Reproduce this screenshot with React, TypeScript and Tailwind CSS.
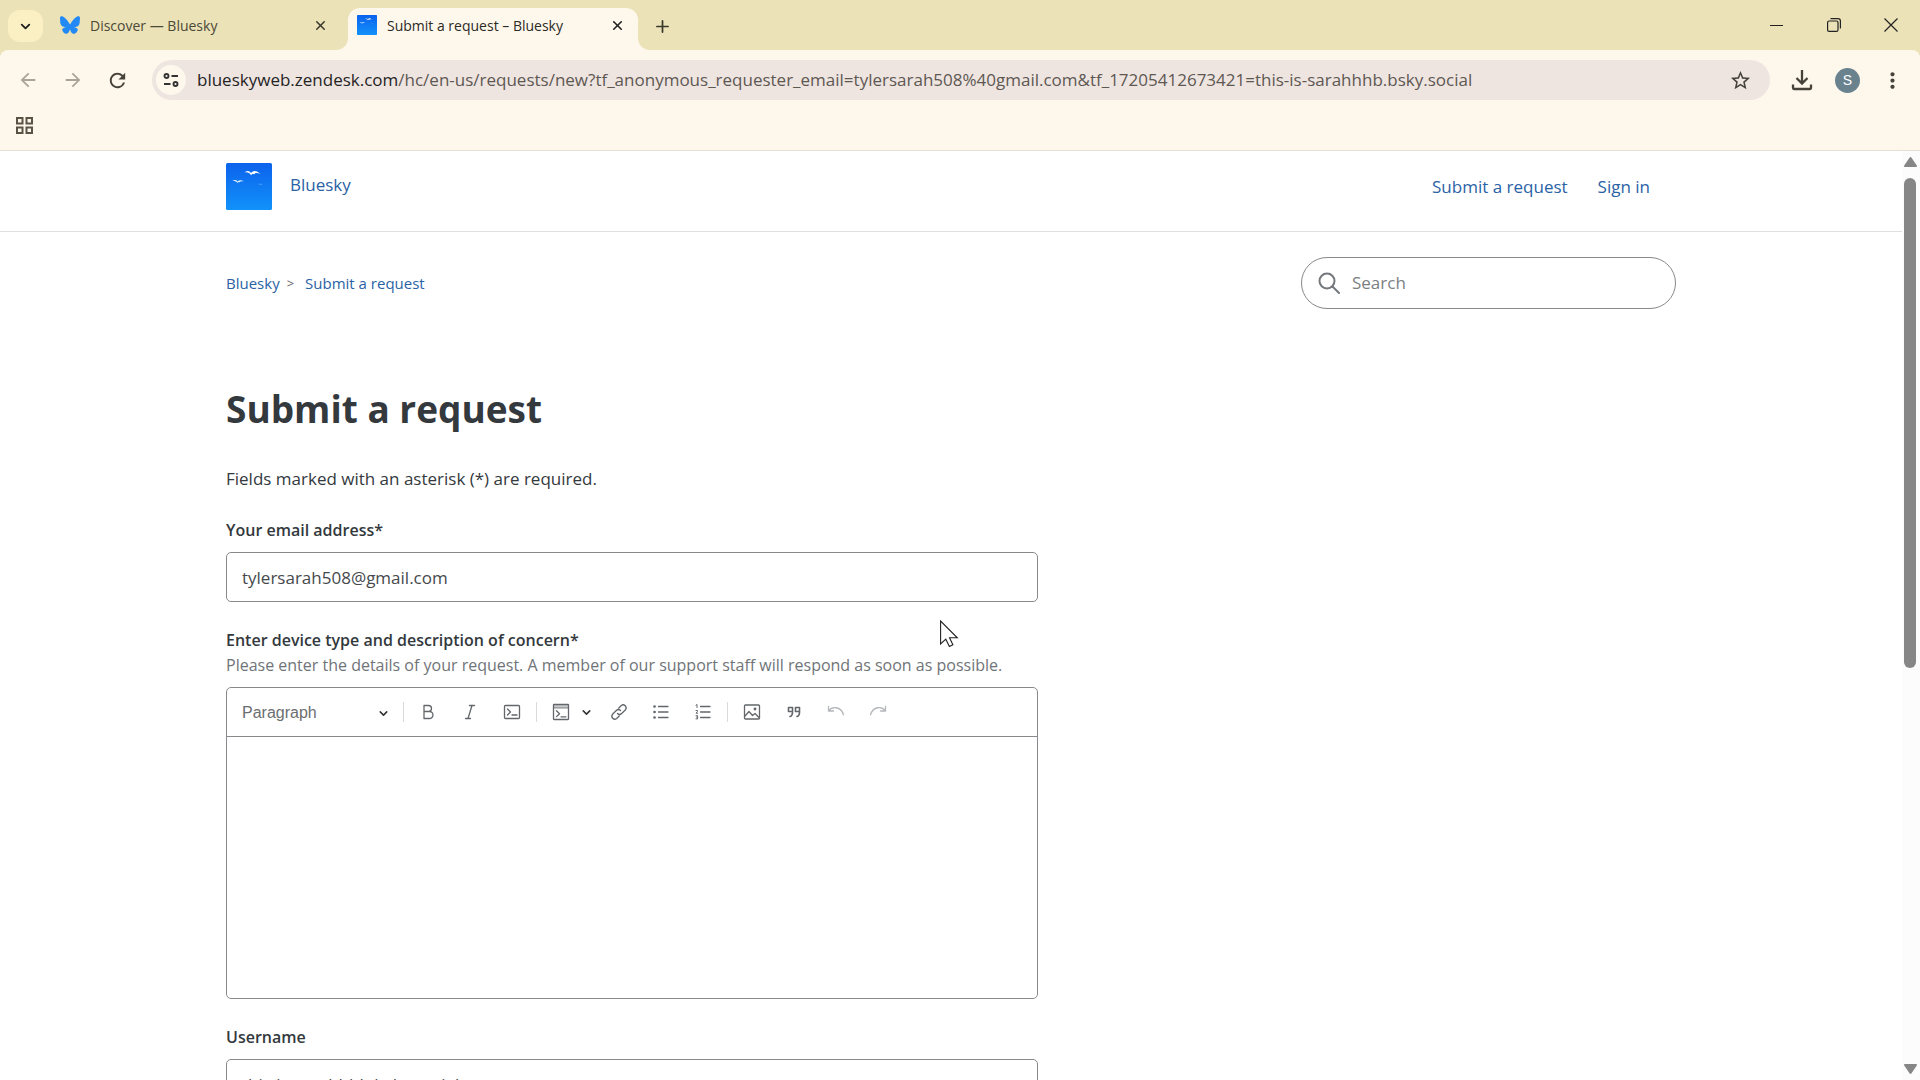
import type { ReactNode } from "react";
import { ChevronDown, Plus, X } from "lucide-react";
import { MdArrowBack, MdArrowForward, MdMoreVert, MdRefresh, MdStarBorder } from "react-icons/md";

const linkColor = "text-[#2a62a6]";

function BirdsLogo({ className }: { className: string }) {
  return (
    <svg viewBox="0 0 46 47" className={className} preserveAspectRatio="none" aria-hidden="true">
      <defs>
        <linearGradient id="sky" x1="0" y1="0" x2="0" y2="1">
          <stop offset="0" stopColor="#0c62ec" />
          <stop offset="1" stopColor="#1192fa" />
        </linearGradient>
      </defs>
      <rect width="46" height="47" rx="1.5" fill="url(#sky)" />
      <path
        d="M18.500 9.500c2.500-2.300 5-2 6.500.6 2-3 5.500-3.200 9.500 1-3-1.500-5.500-1.200-6.500.2l-1.500-.6-1.500 1.600c-1.500-2.700-3.500-3.300-6.500-2.800z"
        fill="#fff"
      />
      <path
        d="M6.500 18c2-1.600 4-1.200 5 .4 1.500-1.500 4-1.500 6.500-.2-2.500-.2-4 .3-4.800 1.400l-1-.5-.8.900c-1.200-1.800-2.700-2.200-4.900-2z"
        fill="#d8ecff"
      />
      <path d="M32 21.300c1.500-.8 3.500-.6 4.800.4-1.600-.2-3-.1-4.800-.4z" fill="#5fb0ff" />
    </svg>
  );
}

function Butterfly() {
  return (
    <svg viewBox="0 0 568 501" className="h-[18px] w-5 shrink-0" fill="#2389f5" aria-hidden="true">
      <path d="M123 34C188 83 259 182 284 235 309 182 380 83 445 34 492-2 568-29 568 58c0 17-10 146-16 167-20 72-94 90-160 79 115 20 144 85 81 149-120 123-172-31-185-70-3-8-4-11-4-8 0-3-1 0-4 8-13 39-65 193-185 70-63-64-34-129 81-149-66 11-140-7-160-79C10 204 0 75 0 58 0-29 76-2 123 34z" />
    </svg>
  );
}

function IconButton({ label, className = "", children }: { label: string; className?: string; children: ReactNode }) {
  return (
    <button type="button" aria-label={label} className={`flex shrink-0 items-center justify-center ${className}`}>
      {children}
    </button>
  );
}

function TabStrip() {
  return (
    <div className="flex h-[50px] items-end bg-[#ebe2b8] text-[14px] text-[#3b382c]">
      <IconButton label="Search tabs" className="mb-2 ml-2 h-8 w-[35px] rounded-xl bg-[#fbf0c4] text-[#222]">
        <ChevronDown size={15} strokeWidth={3} />
      </IconButton>
      <div className="flex h-[42px] w-[305px] items-center gap-[10px] pr-5 pb-2 pl-[17px]">
        <Butterfly />
        <span className="flex-1 truncate text-[#4c4937]">Discover — Bluesky</span>
        <IconButton label="Close tab">
          <X size={15} strokeWidth={2.400} />
        </IconButton>
      </div>
      <div className="relative flex h-[42px] w-[290px] items-center gap-[10px] rounded-t-xl bg-[#fef7ec] pr-[13px] pb-2 pl-[9px]">
        <span className="absolute bottom-0 -left-3 h-3 w-3 overflow-hidden bg-[#fef7ec]">
          <span className="block h-3 w-3 rounded-br-xl bg-[#ebe2b8]" />
        </span>
        <span className="absolute -right-3 bottom-0 h-3 w-3 overflow-hidden bg-[#fef7ec]">
          <span className="block h-3 w-3 rounded-bl-xl bg-[#ebe2b8]" />
        </span>
        <BirdsLogo className="h-5 w-5 shrink-0" />
        <span className="flex-1 truncate text-[#2b2a25]">Submit a request – Bluesky</span>
        <IconButton label="Close tab" className="text-[#222]">
          <X size={15} strokeWidth={2.600} />
        </IconButton>
      </div>
      <IconButton label="New tab" className="mb-2 ml-2 h-8 w-8">
        <Plus size={19} strokeWidth={2.200} />
      </IconButton>
      <div className="ml-auto flex h-full items-center pr-px text-[#222]">
        <IconButton label="Minimize" className="h-full w-[57px]">
          <svg width="13" height="13" viewBox="0 0 13 13" stroke="currentColor">
            <path d="M0 6.500h13" />
          </svg>
        </IconButton>
        <IconButton label="Restore" className="h-full w-[57px]">
          <svg width="14" height="14" viewBox="0 0 14 14" fill="none" stroke="currentColor" strokeWidth="1.200">
            <rect x=".6" y="3" width="10.400" height="10.400" rx="1.500" />
            <path d="M3.500.6H11A2.400 2.400 0 0 1 13.400 3v7.500" />
          </svg>
        </IconButton>
        <IconButton label="Close" className="h-full w-[57px]">
          <svg width="14" height="14" viewBox="0 0 14 14" stroke="currentColor" strokeWidth="1.200">
            <path d="M.5.5l13 13M13.500.5l-13 13" />
          </svg>
        </IconButton>
      </div>
    </div>
  );
}

function AddressBar() {
  return (
    <div className="bg-[#ebe2b8]">
      <div className="flex h-[60px] items-center rounded-t-lg bg-[#fef7ec] px-[15px] text-[#45423a]">
        <IconButton label="Back" className="mr-5 w-[25px] text-[#a9a498]">
          <MdArrowBack size={22} />
        </IconButton>
        <IconButton label="Forward" className="mr-5 w-[25px] text-[#a9a498]">
          <MdArrowForward size={22} />
        </IconButton>
        <IconButton label="Reload" className="mr-[22px] w-[25px]">
          <MdRefresh size={23} />
        </IconButton>
        <div className="flex h-10 flex-1 items-center rounded-full bg-[#eee5e1] pr-[18px] pl-1">
          <IconButton label="View site information" className="mr-[11px] h-[30px] w-[30px] rounded-full bg-[#fef7ec]">
            <svg width="16" height="16" viewBox="0 0 16 16" fill="none" stroke="#333" strokeWidth="1.900">
              <circle cx="3.500" cy="4" r="2" />
              <path d="M8.500 4H15M1 12h6.500" />
              <circle cx="12.500" cy="12" r="2" />
            </svg>
          </IconButton>
          <p className="flex-1 truncate text-[17px] text-[#5e5853]">
            <span className="text-[#25231f]">blueskyweb.zendesk.com</span>
            /hc/en-us/requests/new?tf_anonymous_requester_email=tylersarah508%40gmail.com&amp;tf_17205412673421=this-is-sarahhhb.bsky.social
          </p>
          <IconButton label="Bookmark this page">
            <MdStarBorder size={23} />
          </IconButton>
        </div>
        <IconButton label="Downloads" className="ml-[18px]">
          <svg width="28" height="28" viewBox="0 0 28 28" fill="none" stroke="currentColor" strokeWidth="2.300">
            <path d="M14 4v13M8.500 12l5.500 5.500 5.500-5.500M5 18.500V22a1 1 0 0 0 1 1h16a1 1 0 0 0 1-1v-3.500" />
          </svg>
        </IconButton>
        <button
          type="button"
          aria-label="Profile"
          className="ml-[19px] flex h-[25px] w-[25px] items-center justify-center rounded-full bg-[#6a828e] font-['Liberation_Sans',sans-serif] text-[14px] text-white"
        >
          S
        </button>
        <IconButton label="Menu" className="ml-5">
          <MdMoreVert size={25} />
        </IconButton>
      </div>
    </div>
  );
}

function BookmarksBar() {
  return (
    <div className="flex h-[41px] items-start border-b border-[#e6dfd3] bg-[#fef7ec] pt-[7px] pl-4 text-[#5a5344]">
      <IconButton label="Apps">
        <svg width="17" height="17" viewBox="0 0 17 17" fill="none" stroke="currentColor" strokeWidth="2">
          <rect x="1" y="1" width="5.500" height="5.500" />
          <rect x="10.500" y="1" width="5.500" height="5.500" />
          <rect x="1" y="10.500" width="5.500" height="5.500" />
          <rect x="10.500" y="10.500" width="5.500" height="5.500" />
        </svg>
      </IconButton>
    </div>
  );
}

function Glyph({ children }: { children: ReactNode }) {
  return (
    <svg
      width="18"
      height="18"
      viewBox="0 0 18 18"
      fill="none"
      stroke="currentColor"
      strokeWidth="1.300"
      strokeLinecap="round"
      strokeLinejoin="round"
      aria-hidden="true"
    >
      {children}
    </svg>
  );
}

function Separator() {
  return <span className="mx-[3px] h-5 w-px shrink-0 bg-[#d8dcde]" />;
}

const toolButton = "h-10 w-[42px]";

function EditorToolbar() {
  return (
    <div className="flex h-[49px] items-center border-b border-[#87898c] text-[#63676b]">
      <div className="relative">
        <select
          aria-label="Heading"
          className="h-10 w-[173px] appearance-none bg-transparent pl-[15px] font-['Liberation_Sans',sans-serif] text-[16px] text-[#6b6e71]"
        >
          <option>Paragraph</option>
        </select>
        <ChevronDown size={13} strokeWidth={2.800} className="pointer-events-none absolute top-[15px] right-[10px] text-[#333]" />
      </div>
      <Separator />
      <IconButton label="Bold" className={toolButton}>
        <Glyph>
          <path d="M5 2.500h4.500a3 3 0 0 1 0 6H5zM5 8.500h5.500a3.500 3.500 0 0 1 0 7H5z" />
        </Glyph>
      </IconButton>
      <IconButton label="Italic" className={toolButton}>
        <Glyph>
          <path d="M8.500 2.500h5M4.500 15.500h5M11 2.500l-4 13" />
        </Glyph>
      </IconButton>
      <IconButton label="Code" className={toolButton}>
        <Glyph>
          <rect x="1.500" y="2.500" width="15" height="13" rx="1" />
          <path d="M4.500 6l3 3-3 3M9 12h5" />
        </Glyph>
      </IconButton>
      <Separator />
      <IconButton label="Insert code block" className="h-10 w-[34px] pl-2">
        <Glyph>
          <rect x="1.500" y="1.500" width="15" height="3.500" fill="currentColor" fillOpacity=".35" stroke="none" />
          <rect x="1.500" y="1.500" width="15" height="15" rx=".5" />
          <path d="M1.500 5h15" strokeWidth=".8" />
          <path d="M4.500 7.800l3 2.900-3 2.900M9 13.800h5" />
        </Glyph>
      </IconButton>
      <IconButton label="Code block language" className="h-10 w-6 text-[#333]">
        <ChevronDown size={13} strokeWidth={2.800} />
      </IconButton>
      <IconButton label="Link" className={toolButton}>
        <Glyph>
          <path d="M7.500 10.500a3 3 0 0 0 4.200 0l3.800-3.800a3 3 0 0 0-4.200-4.200L8.800 5M10.500 7.500a3 3 0 0 0-4.200 0l-3.800 3.800a3 3 0 0 0 4.200 4.200L9.200 13" />
        </Glyph>
      </IconButton>
      <IconButton label="Bulleted list" className={toolButton}>
        <Glyph>
          <path d="M6.500 3.500h9.500M6.500 9h9.500M6.500 14.500h9.500" />
          <path d="M2.500 3.500h.1M2.500 9h.1M2.500 14.500h.1" strokeWidth="2.600" />
        </Glyph>
      </IconButton>
      <IconButton label="Numbered list" className={toolButton}>
        <Glyph>
          <path d="M6.500 3.500h9.500M6.500 9h9.500M6.500 14.500h9.500" />
          <path d="M2 2.200l1-.7v3M2 7.500h1.500v1L2 10.200h1.700M2 12.700h1.600v1.500H2.500h1.100v1.700H2" strokeWidth="1" />
        </Glyph>
      </IconButton>
      <Separator />
      <IconButton label="Add image" className={toolButton}>
        <Glyph>
          <rect x="1.500" y="2" width="15" height="14" rx="1" />
          <path d="M2 13l4-4.500 3.500 4 2.500-2 4 4" />
          <circle cx="12" cy="6" r=".8" fill="currentColor" />
        </Glyph>
      </IconButton>
      <IconButton label="Quote" className={toolButton}>
        <Glyph>
          <path d="M7.500 8.500H3.500v-4h4v5c0 2-.8 3.500-2.500 4M14.500 8.500h-4v-4h4v5c0 2-.8 3.500-2.500 4" strokeWidth="1.600" />
        </Glyph>
      </IconButton>
      <IconButton label="Undo" className={`${toolButton} text-[#b4b7ba]`}>
        <Glyph>
          <path d="M1.500 3.500v4.500h5M1.800 7.800c3-4.500 12-5 14.700 4" />
        </Glyph>
      </IconButton>
      <IconButton label="Redo" className={`${toolButton} text-[#b4b7ba]`}>
        <Glyph>
          <path d="M16.500 3.500v4.500h-5M16.200 7.800c-3-4.500-12-5-14.700 4" />
        </Glyph>
      </IconButton>
    </div>
  );
}

function SiteHeader() {
  return (
    <header className="border-b border-[#dddfe0]">
      <div className={`mx-auto flex h-20 max-w-[1450px] items-center justify-between pb-[9px] text-[17px] ${linkColor}`}>
        <a href="#home" className="flex items-center gap-[18px]">
          <BirdsLogo className="h-[47px] w-[46px]" />
          <span className="pb-1">Bluesky</span>
        </a>
        <nav className="flex gap-[30px] pr-[26px]">
          <a href="#request">Submit a request</a>
          <a href="#signin">Sign in</a>
        </nav>
      </div>
    </header>
  );
}

function RequestForm() {
  return (
    <form className="w-[56%] text-[16px] leading-[25px]">
      <p className="mb-[27px] text-[17px]">Fields marked with an asterisk (*) are required.</p>
      <label htmlFor="email" className="block font-semibold">
        Your email address*
      </label>
      <input
        id="email"
        type="email"
        defaultValue="tylersarah508@gmail.com"
        className="mt-[9px] mb-[26px] h-[50px] w-full rounded-[5px] border border-[#87898c] px-[15px] text-[17px] text-[#45494c]"
      />
      <label htmlFor="description" className="block font-semibold">
        Enter device type and description of concern*
      </label>
      <p id="description-hint" className="text-[#6f7478]">
        Please enter the details of your request. A member of our support staff will respond as soon as possible.
      </p>
      <div className="mt-[9px] mb-[26px] rounded-[5px] border border-[#87898c]">
        <EditorToolbar />
        <textarea
          id="description"
          aria-describedby="description-hint"
          className="block h-[261px] w-full resize-none px-[15px] py-3 outline-none"
        />
      </div>
      <label htmlFor="username" className="block font-semibold">
        Username
      </label>
      <input
        id="username"
        defaultValue="this-is-sarahhhb.bsky.social"
        className="mt-[9px] h-[50px] w-full rounded-[5px] border border-[#87898c] px-[15px] text-[17px] text-[#45494c]"
      />
    </form>
  );
}

function Scrollbar() {
  return (
    <div className="flex w-[18px] shrink-0 flex-col items-center bg-[#fcfcfc] py-[6px] pr-[2px] text-[#868686]" aria-hidden="true">
      <svg width="13" height="10" viewBox="0 0 13 10" fill="currentColor">
        <path d="M5.500.8a1.200 1.200 0 0 1 2 0l5.300 7.700a1 1 0 0 1-.8 1.500H1a1 1 0 0 1-.8-1.500z" />
      </svg>
      <div className="my-[11px] flex w-3 flex-1 flex-col">
        <div className="h-[56%] rounded-full bg-[#868686]" />
      </div>
      <svg width="13" height="10" viewBox="0 0 13 10" fill="currentColor">
        <path d="M5.500 9.200a1.200 1.200 0 0 0 2 0l5.300-7.700A1 1 0 0 0 12 0H1a1 1 0 0 0-.8 1.500z" />
      </svg>
    </div>
  );
}

function Cursor() {
  return (
    <svg className="pointer-events-none absolute top-[620px] left-[940px]" width="19" height="27" viewBox="0 0 19 27" aria-hidden="true">
      <path d="M.6 1v23l5.200-4.800 3.600 7.300 3.500-1.700-3.400-7h7.800z" fill="#fff" stroke="#222" strokeWidth="1.100" />
    </svg>
  );
}

export default function App() {
  return (
    <div className="relative flex h-screen flex-col overflow-hidden bg-white font-['Open_Sans','Noto_Sans',sans-serif] text-[#33393d]">
      <TabStrip />
      <AddressBar />
      <BookmarksBar />
      <div className="flex min-h-0 flex-1">
        <div className="flex-1 overflow-hidden">
          <SiteHeader />
          <main className="mx-auto max-w-[1450px] pt-[25px]">
            <div className="flex items-center justify-between">
              <nav aria-label="Breadcrumb" className={`flex gap-[7px] text-[15px] leading-6 ${linkColor}`}>
                <a href="#home">Bluesky</a>
                <span className="text-[13px] text-[#666]">&gt;</span>
                <a href="#request" className="pl-1">
                  Submit a request
                </a>
              </nav>
              <label className="flex h-[52px] w-[375px] items-center gap-3 rounded-full border border-[#87898c] pr-4 pl-4">
                <svg width="22" height="22" viewBox="0 0 22 22" fill="none" stroke="#74787c" strokeWidth="2" strokeLinecap="round">
                  <circle cx="9" cy="9" r="7.500" />
                  <path d="M14.500 14.500l6.500 6.500" />
                </svg>
                <input
                  type="search"
                  placeholder="Search"
                  aria-label="Search"
                  className="min-w-0 flex-1 text-[17px] outline-none placeholder:text-[#7b7f83]"
                />
              </label>
            </div>
            <h1 className="mt-[75px] mb-8 text-[37px] leading-[50px] font-bold">Submit a request</h1>
            <RequestForm />
          </main>
        </div>
        <Scrollbar />
      </div>
      <Cursor />
    </div>
  );
}
